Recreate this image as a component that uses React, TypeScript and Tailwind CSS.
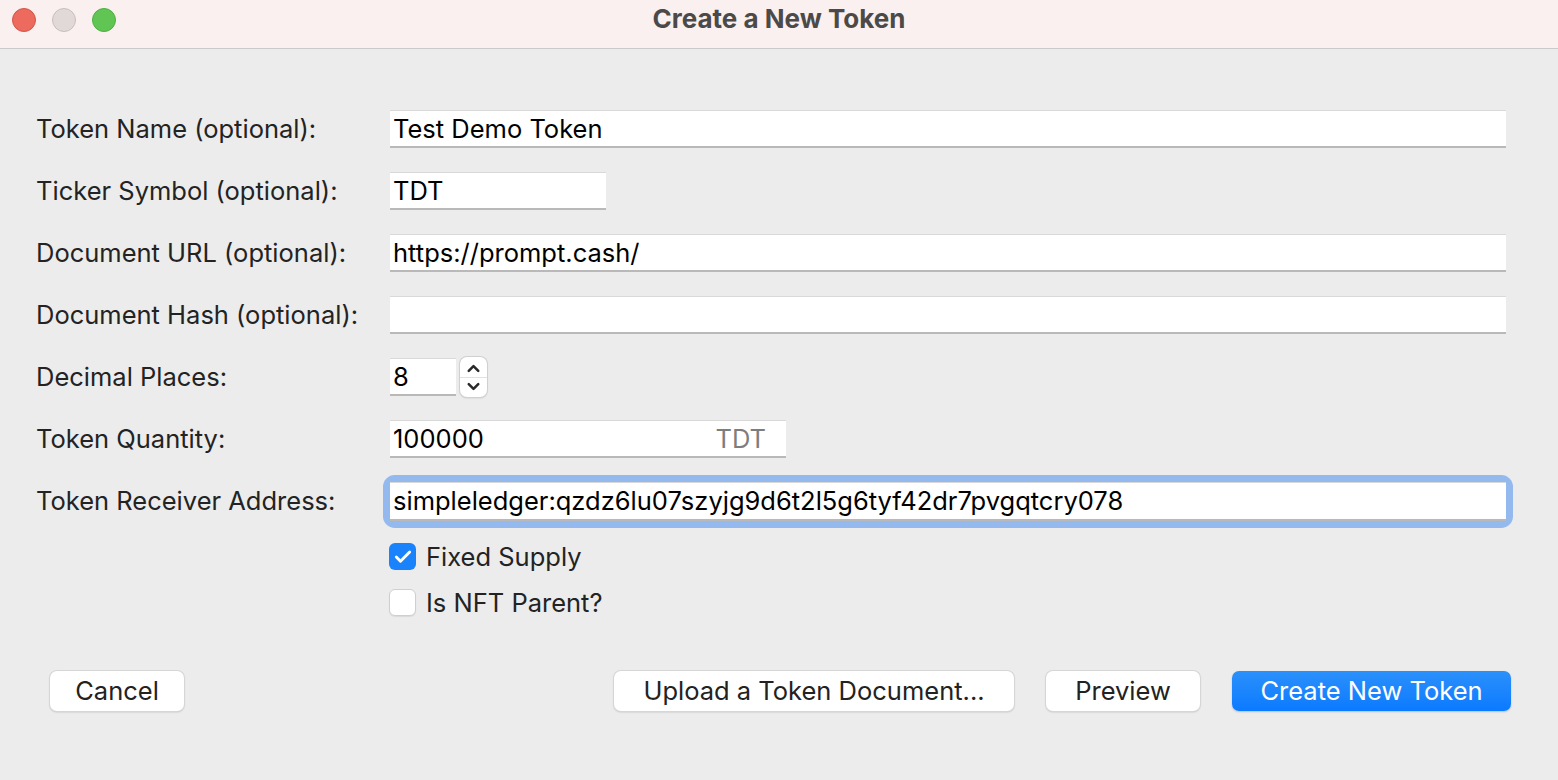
import { Check, ChevronUp, ChevronDown } from "lucide-react"

const font = { fontFamily: "Inter, 'Noto Sans', sans-serif" }

function Field({ value, className = "", suffix }: { value: string; className?: string; suffix?: string }) {
  return (
    <div
      className={`h-[38px] bg-white border-t border-t-[#d9d9d9] border-b-2 border-b-[#b9b9b9] flex items-center pl-[3px] pr-5 text-[25.5px] leading-none text-black ${className}`}
    >
      <span className="flex-1 whitespace-nowrap">{value}</span>
      {suffix && <span className="text-[#7d7d7d]">{suffix}</span>}
    </div>
  )
}

function Row({ label, children }: { label: string; children: React.ReactNode }) {
  return (
    <div className="flex items-center h-[38px]">
      <div className="w-[353px] shrink-0 -ml-px text-[25.5px] leading-none text-[#232323] whitespace-nowrap">{label}</div>
      <div className="flex-1 flex items-center ml-px">{children}</div>
    </div>
  )
}

function Button({ children, className = "" }: { children: React.ReactNode; className?: string }) {
  return (
    <button
      className={`h-10 rounded-[7px] bg-white text-[25.5px] leading-none text-[#222] shadow-[0_0_0_1px_#d6d6d6,0_1px_2px_rgba(0,0,0,0.25)] flex items-center justify-center ${className}`}
    >
      {children}
    </button>
  )
}

export default function App() {
  return (
    <div className="w-[1558px] h-[780px] bg-[#ececec] flex flex-col" style={font}>
      <div className="h-[49px] shrink-0 bg-[#faf0ef] border-b border-[#cacaca] flex items-center relative">
        <div className="flex items-center gap-4 pl-3 pb-2">
          <span className="w-6 h-6 rounded-full bg-[#ec6a5e] border border-[#d25549]" />
          <span className="w-6 h-6 rounded-full bg-[#e1d9d7] border border-[#c9c0be]" />
          <span className="w-6 h-6 rounded-full bg-[#61c554] border border-[#4fae43]" />
        </div>
        <div className="absolute inset-x-0 top-[5px] text-center text-[26px] leading-[28px] font-bold text-[#4c4a48]">
          Create a New Token
        </div>
      </div>

      <div className="flex flex-col gap-6 pt-[61px] pl-[37px] pr-[52px]">
        <Row label="Token Name (optional):">
          <Field value="Test Demo Token" className="w-full" />
        </Row>
        <Row label="Ticker Symbol (optional):">
          <Field value="TDT" className="w-[216px]" />
        </Row>
        <Row label="Document URL (optional):">
          <Field value="https://prompt.cash/" className="w-full" />
        </Row>
        <Row label="Document Hash (optional):">
          <Field value="" className="w-full" />
        </Row>
        <Row label="Decimal Places:">
          <Field value="8" className="w-[66px] h-[36px]" />
          <div className="ml-[4px] w-[27px] h-10 rounded-[7px] bg-white shadow-[0_0_0_1px_#d0d0d0,0_1px_2px_rgba(0,0,0,0.2)] flex flex-col items-center justify-center text-[#2a2a2a]">
            <ChevronUp size={19} strokeWidth={3.2} className="-mb-[1px]" />
            <div className="w-full h-px bg-[#e2e2e2]" />
            <ChevronDown size={19} strokeWidth={3.2} className="-mt-[1px]" />
          </div>
        </Row>
        <Row label="Token Quantity:">
          <Field value="100000" suffix="TDT" className="w-[396px]" />
        </Row>
        <Row label="Token Receiver Address:">
          <div className="w-full rounded-[5px] shadow-[0_0_0_7px_#93b9ee]">
            <Field value="simpleledger:qzdz6lu07szyjg9d6t2l5g6tyf42dr7pvgqtcry078" className="w-full h-[39px]" />
          </div>
        </Row>

        <div className="flex flex-col gap-[19px] pl-[352px] -mt-px">
          <label className="flex items-center h-[27px] gap-[10px] text-[25.5px] leading-none text-[#232323]">
            <span className="w-[27px] h-[27px] rounded-[6px] bg-[#1a82fb] flex items-center justify-center">
              <Check size={20} strokeWidth={3.5} className="text-white" />
            </span>
            Fixed Supply
          </label>
          <label className="flex items-center h-[27px] gap-[10px] text-[25.5px] leading-none text-[#232323]">
            <span className="w-[27px] h-[27px] rounded-[6px] bg-white border border-[#cfcfcf] shadow-[0_1px_1px_rgba(0,0,0,0.08)]" />
            Is NFT Parent?
          </label>
        </div>

        <div className="flex items-center mt-[31px] pl-[13px]">
          <Button className="w-[134px]">Cancel</Button>
          <div className="flex-1" />
          <Button className="w-[400px]">Upload a Token Document...</Button>
          <Button className="w-[154px] ml-8">Preview</Button>
          <button className="ml-8 mr-[-5px] h-10 w-[279px] rounded-[7px] text-[25.5px] leading-none text-white bg-gradient-to-b from-[#2a90fb] to-[#0a7aff] shadow-[0_1px_2px_rgba(0,0,0,0.2)] flex items-center justify-center">
            Create New Token
          </button>
        </div>
      </div>
    </div>
  )
}
